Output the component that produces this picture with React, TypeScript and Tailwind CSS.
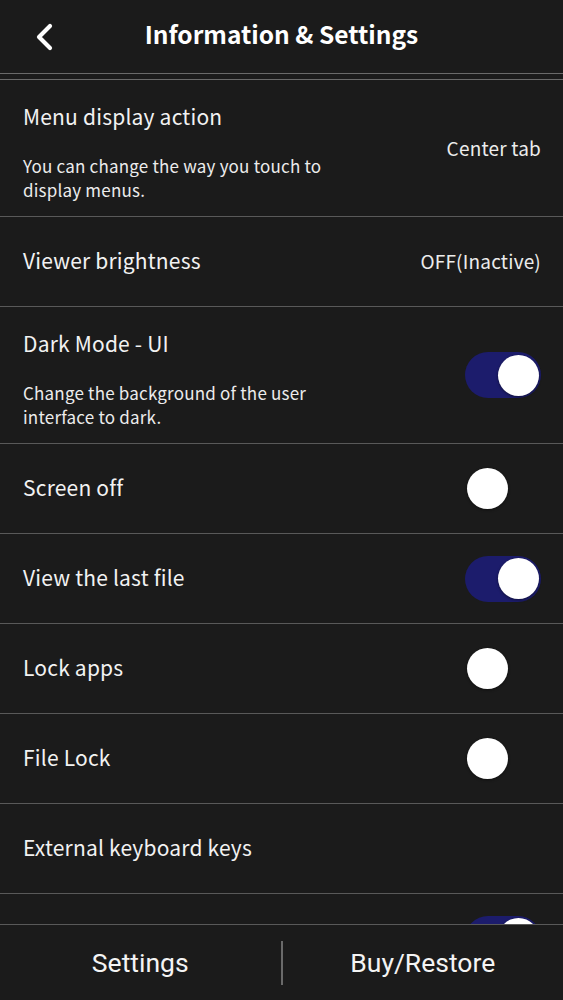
import React from "react";

const FONT = { fontFamily: '"Noto Sans CJK KR", "Noto Sans", sans-serif' };

function Toggle({ on }: { on: boolean }) {
  return (
    <div
      className={`flex h-[46px] w-[76px] items-center rounded-full px-[2px] ${
        on ? "justify-end bg-[#1c1c6c]" : "justify-start bg-transparent"
      }`}
    >
      <div className="h-[41px] w-[41px] rounded-full bg-white shadow-[0_1px_3px_rgba(0,0,0,0.45)]" />
    </div>
  );
}

type RowProps = {
  title?: string;
  desc?: string;
  value?: string;
  toggle?: boolean;
};

function Row({ title, desc, value, toggle }: RowProps) {
  const right =
    toggle !== undefined ? (
      <Toggle on={toggle} />
    ) : value ? (
      <span className="text-[19px] tracking-[0.2px] text-[#ececec]">{value}</span>
    ) : null;

  if (desc) {
    return (
      <div className="flex h-[137px] shrink-0 items-center justify-between border-b border-[#595959] pl-[23px] pr-[22px]">
        <div className="flex h-full flex-col pt-[22px]">
          <div className="text-[21px] leading-[28px] tracking-[0.2px] text-[#f2f2f2]">{title}</div>
          <div className="mt-[24px] w-[320px] text-[17px] leading-[23.5px] tracking-[0.2px] text-[#ececec]">
            {desc}
          </div>
        </div>
        {right}
      </div>
    );
  }
  return (
    <div className="flex h-[90px] shrink-0 items-center justify-between border-b border-[#595959] pl-[23px] pr-[22px]">
      <div className="pb-[3px] text-[21px] leading-[28px] tracking-[0.2px] text-[#f2f2f2]">{title}</div>
      {right}
    </div>
  );
}

export default function App() {
  return (
    <div className="flex h-screen w-full flex-col overflow-hidden bg-[#1b1b1b] text-white" style={FONT}>
      <div className="relative flex h-[73px] shrink-0 items-center justify-center pb-[4px]">
        <svg
          className="absolute left-[33px] top-[21px]"
          width="24"
          height="32"
          viewBox="0 0 24 32"
          fill="none"
        >
          <polyline
            points="17,5 6,16 17,27"
            stroke="#ffffff"
            strokeWidth="4.2"
            strokeLinecap="round"
            strokeLinejoin="round"
          />
        </svg>
        <h1 className="text-[24.5px] font-bold leading-none text-white">
          Information &amp; Settings
        </h1>
      </div>
      <div className="h-px shrink-0 bg-[#6a6a6a]" />
      <div className="h-[5px] shrink-0" />
      <div className="h-px shrink-0 bg-[#6a6a6a]" />
      <div className="flex min-h-0 flex-1 flex-col overflow-hidden">
        <Row
          title="Menu display action"
          desc="You can change the way you touch to display menus."
          value="Center tab"
        />
        <Row title="Viewer brightness" value="OFF(Inactive)" />
        <Row
          title="Dark Mode - UI"
          desc="Change the background of the user interface to dark."
          toggle={true}
        />
        <Row title="Screen off" toggle={false} />
        <Row title="View the last file" toggle={true} />
        <Row title="Lock apps" toggle={false} />
        <Row title="File Lock" toggle={false} />
        <Row title="External keyboard keys" />
        <Row toggle={true} />
      </div>
      <div
        className="flex h-[76px] shrink-0 items-center border-t border-[#595959]"
        style={{ fontFamily: 'Roboto, "Noto Sans", sans-serif' }}
      >
        <div className="flex flex-1 justify-center text-[26.5px] text-[#f4f4f4]">Settings</div>
        <div className="h-[44px] w-[2px] bg-[#6a6a6a]" />
        <div className="flex flex-1 justify-center text-[26.5px] text-[#f4f4f4]">Buy/Restore</div>
      </div>
    </div>
  );
}
